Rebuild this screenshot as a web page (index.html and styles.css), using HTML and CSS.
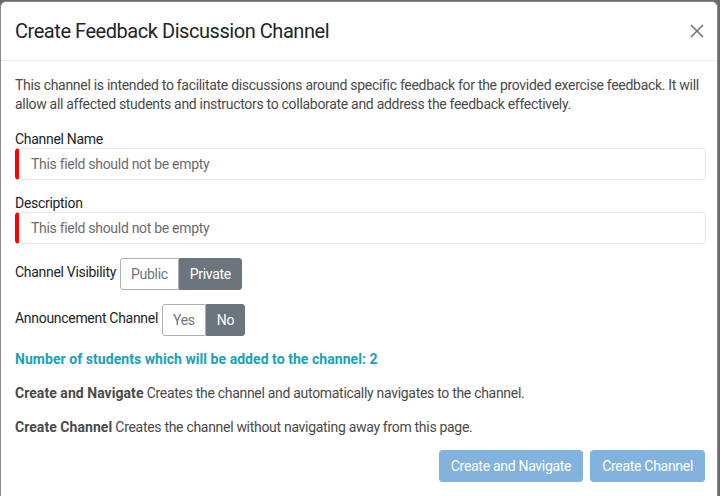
FILE: index.html
```html
<!DOCTYPE html>
<html>
<head>
<meta charset="utf-8">
<link rel="stylesheet" href="styles.css">
</head>
<body>
<div class="modal">
  <div class="modal-header">
    <h4 class="modal-title">Create Feedback Discussion Channel</h4>
    <button class="close" aria-label="Close">
      <svg width="14" height="14" viewBox="0 0 14 14"><path d="M1 1L13 13M13 1L1 13" stroke="#6f6f6f" stroke-width="1.5" fill="none"/></svg>
    </button>
  </div>
  <div class="modal-body">
    <p class="intro">This channel is intended to facilitate discussions around specific feedback for the provided exercise feedback. It will allow all affected students and instructors to collaborate and address the feedback effectively.</p>
    <div class="form-group">
      <label class="label">Channel Name</label>
      <div class="input invalid"><span class="placeholder">This field should not be empty</span></div>
    </div>
    <div class="form-group">
      <label class="label">Description</label>
      <div class="input invalid"><span class="placeholder">This field should not be empty</span></div>
    </div>
    <div class="inline-group">
      <span class="inline-label">Channel Visibility</span>
      <div class="btn-group">
        <span class="toggle">Public</span>
        <span class="toggle active">Private</span>
      </div>
    </div>
    <div class="inline-group">
      <span class="inline-label">Announcement Channel</span>
      <div class="btn-group">
        <span class="toggle">Yes</span>
        <span class="toggle active">No</span>
      </div>
    </div>
    <p class="count">Number of students which will be added to the channel: 2</p>
    <p class="desc"><strong>Create and Navigate</strong> Creates the channel and automatically navigates to the channel.</p>
    <p class="desc"><strong>Create Channel</strong> Creates the channel without navigating away from this page.</p>
  </div>
  <div class="modal-footer">
    <button class="btn-primary">Create and Navigate</button>
    <button class="btn-primary">Create Channel</button>
  </div>
</div>
</body>
</html>
```
FILE: styles.css
```css
* { box-sizing: border-box; }
html, body { margin: 0; padding: 0; }
body {
  background: #6b6b6b;
  height: 496px;
  overflow: hidden;
  padding-top: 1px;
  font-family: Roboto, "Liberation Sans", Arial, sans-serif;
  font-size: 14px;
  letter-spacing: -0.3px;
  color: #212529;
}
.modal {
  width: 718px;
  height: 495px;
  background: #fff;
  border: 1px solid #8a8a8a;
  border-bottom: 0;
  border-radius: 6px 6px 0 0;
  overflow: hidden;
}
.modal-header {
  height: 59px;
  display: flex;
  align-items: center;
  justify-content: space-between;
  padding: 0 12px 0 14px;
  border-bottom: 1px solid #e9ecef;
}
.modal-title {
  margin: 0;
  font-size: 20px;
  font-weight: 400;
  letter-spacing: -0.45px;
  color: #212529;
}
.close {
  border: 0;
  background: none;
  padding: 0;
  width: 16px;
  height: 16px;
  display: flex;
  align-items: center;
  justify-content: center;
}
.modal-body {
  padding: 15px 11px 0 14px;
  line-height: 19px;
}
.intro {
  margin: 0 0 16px;
  color: #4a4a4a;
}
.form-group { margin-bottom: 14px; }
.label { display: block; color: #212529; line-height: 18px; }
.input {
  height: 32px;
  border: 1px solid #e6e6e6;
  border-radius: 4px;
  display: flex;
  align-items: center;
  padding-left: 12px;
}
.input.invalid { border-left: 4px solid #ff0000; }
.placeholder { color: #6c6c6c; }
.inline-group {
  display: flex;
  align-items: center;
  gap: 4px;
  margin-bottom: 14px;
}
.inline-label { color: #212529; margin-top: -3px; }
.btn-group { display: flex; }
.toggle {
  height: 32px;
  display: flex;
  align-items: center;
  padding: 0 10px;
  border: 1px solid #aab0b5;
  color: #6c757d;
  background: #fff;
}
.toggle:first-child { border-radius: 3px 0 0 3px; }
.toggle:last-child { border-radius: 0 3px 3px 0; }
.toggle.active {
  background: #6c757d;
  border-color: #6c757d;
  color: #fff;
}
.count {
  margin: 0 0 15px;
  color: #17a2b8;
  font-weight: 700;
  letter-spacing: 0.05px;
}
.desc {
  margin: 0 0 15px;
  color: #4a4a4a;
}
.desc:last-child { margin-bottom: 13px; }
.desc strong { color: #4a4a4a; letter-spacing: 0.05px; }
.modal-footer {
  display: flex;
  justify-content: flex-end;
  gap: 7px;
  padding: 0 12px 0 14px;
}
.btn-primary {
  height: 32px;
  border: 0;
  border-radius: 4px;
  background: #81b3de;
  color: #fff;
  font-family: inherit;
  font-size: 14px;
  letter-spacing: -0.3px;
  padding: 0 12px;
}
```
